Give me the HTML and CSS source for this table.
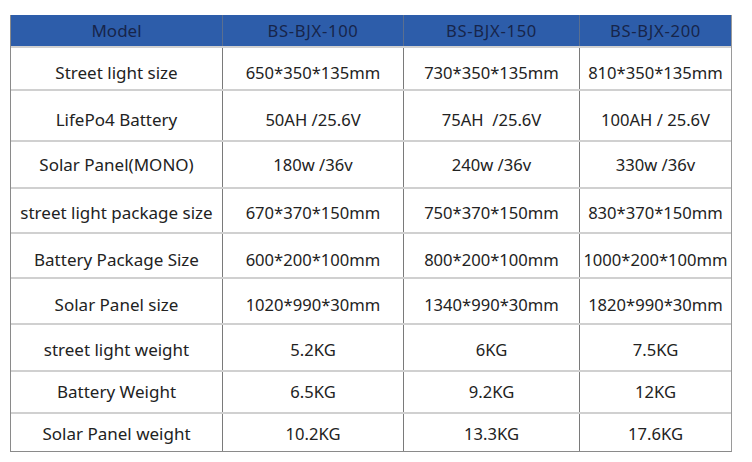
FILE: index.html
```html
<!DOCTYPE html>
<html>
<head>
<meta charset="utf-8">
<link rel="stylesheet" href="styles.css">
</head>
<body>
<div class="sheet">
  <div class="row head">
    <div class="cell">Model</div><div class="cell">BS-BJX-100</div><div class="cell">BS-BJX-150</div><div class="cell">BS-BJX-200</div>
  </div>
  <div class="row r1">
    <div class="cell">Street light size</div><div class="cell">650*350*135mm</div><div class="cell">730*350*135mm</div><div class="cell">810*350*135mm</div>
  </div>
  <div class="row r2">
    <div class="cell">LifePo4 Battery</div><div class="cell">50AH /25.6V</div><div class="cell">75AH&nbsp;&nbsp;/25.6V</div><div class="cell">100AH / 25.6V</div>
  </div>
  <div class="row r3">
    <div class="cell">Solar Panel(MONO)</div><div class="cell">180w /36v</div><div class="cell">240w /36v</div><div class="cell">330w /36v</div>
  </div>
  <div class="row r4">
    <div class="cell">street light package size</div><div class="cell">670*370*150mm</div><div class="cell">750*370*150mm</div><div class="cell">830*370*150mm</div>
  </div>
  <div class="row r5">
    <div class="cell">Battery Package Size</div><div class="cell">600*200*100mm</div><div class="cell">800*200*100mm</div><div class="cell">1000*200*100mm</div>
  </div>
  <div class="row r6">
    <div class="cell">Solar Panel size</div><div class="cell">1020*990*30mm</div><div class="cell">1340*990*30mm</div><div class="cell">1820*990*30mm</div>
  </div>
  <div class="row r7">
    <div class="cell">street light weight</div><div class="cell">5.2KG</div><div class="cell">6KG</div><div class="cell">7.5KG</div>
  </div>
  <div class="row r8">
    <div class="cell">Battery Weight</div><div class="cell">6.5KG</div><div class="cell">9.2KG</div><div class="cell">12KG</div>
  </div>
  <div class="row r9">
    <div class="cell">Solar Panel weight</div><div class="cell">10.2KG</div><div class="cell">13.3KG</div><div class="cell">17.6KG</div>
  </div>
</div>
</body>
</html>
```
FILE: styles.css
```css
html, body {
  margin: 0;
  padding: 0;
  background: #ffffff;
}
body {
  width: 752px;
  height: 462px;
  font-family: "Noto Sans", "Open Sans", sans-serif;
  color: #222222;
}
.sheet {
  position: relative;
  top: 15px;
  left: 10px;
  width: 720px;
  border-left: 1px solid #8a8a8a;
  border-right: 1px solid #9a9a9a;
  border-bottom: 1px solid #8a8a8a;
}
.row {
  display: grid;
  grid-template-columns: 212px 181px 176px 151px;
  box-sizing: border-box;
  border-top: 2px solid #d0d0d0;
}
.cell {
  display: flex;
  align-items: center;
  justify-content: center;
  box-sizing: border-box;
  font-size: 16.6px;
  line-height: 20px;
  white-space: pre;
  border-right: 1px solid #7a7a7a;
}
.cell:first-child {
  font-size: 17px;
}
.cell:last-child {
  border-right: none;
}
.head {
  background: #2d5daa;
  border-top: none;
  height: 31px;
  color: #17254a;
}
.head .cell {
  border-right: 1px solid #5a6f90;
  padding-top: 1px;
  letter-spacing: 0.7px;
}
.head .cell:first-child { letter-spacing: 0; }
.head .cell:last-child { border-right: none; }
.r1 { height: 43px; }
.r1 .cell { padding-top: 8px; }
.r2 { height: 51px; }
.r2 .cell { padding-top: 8px; }
.r3 { height: 47px; }
.r3 .cell { padding-top: 0; }
.r4 { height: 45px; }
.r4 .cell { padding-top: 4px; }
.r5 { height: 45px; }
.r5 .cell { padding-top: 9px; }
.r6 { height: 46px; }
.r6 .cell { padding-top: 8px; }
.r7 { height: 47px; }
.r7 .cell { padding-top: 4px; }
.r8 { height: 42px; }
.r8 .cell { padding-top: 0; }
.r9 { height: 39px; }
.r9 .cell { padding-top: 2px; }
```
